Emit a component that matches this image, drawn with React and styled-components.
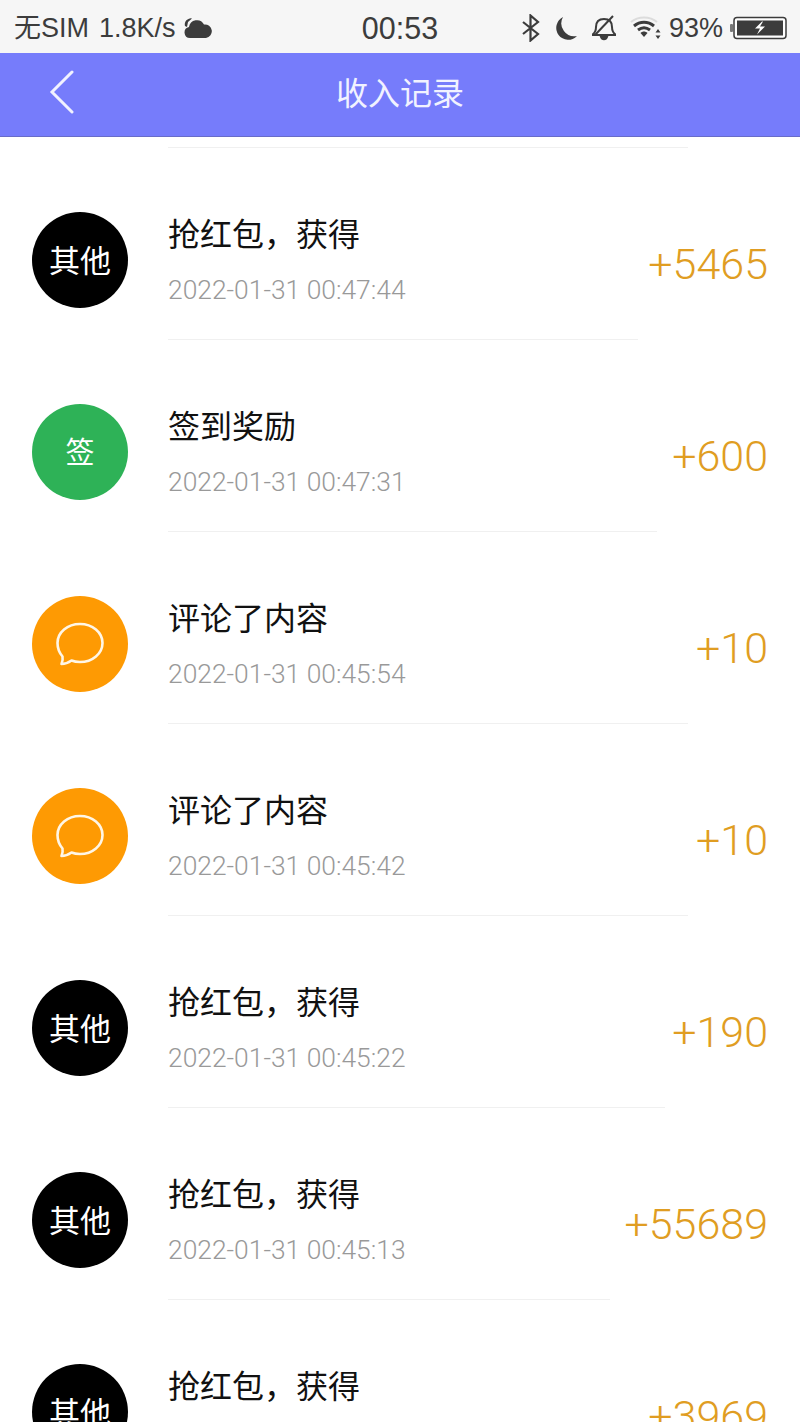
import React from 'react'
import styled, { createGlobalStyle } from 'styled-components'

const cjk = `"Liberation Sans", "Noto Sans CJK SC", sans-serif`

const Global = createGlobalStyle`
  html, body { margin: 0; padding: 0; background: #fff; }
  body { font-family: ${cjk}; }
`

const Page = styled.div`
  width: 800px;
  height: 1422px;
  overflow: hidden;
  background: #fff;
`

const StatusBar = styled.div`
  height: 53px;
  background: #f6f6f6;
  display: flex;
  align-items: center;
  justify-content: space-between;
  padding: 3px 12px 0 14px;
  box-sizing: border-box;
  color: #3c3c3c;
  font-size: 27px;
  position: relative;
`

const StatusGroup = styled.div`
  display: flex;
  align-items: center;
  gap: ${p => p.$gap || 0}px;
`

const StatusText = styled.span`
  display: block;
  line-height: 32px;
  height: 32px;
  margin-left: ${p => p.$left || 0}px;
  white-space: nowrap;
`

const Clock = styled.div`
  position: absolute;
  left: 0;
  right: 0;
  top: 12px;
  text-align: center;
  font-size: 30.500px;
  line-height: 32px;
`

const Header = styled.header`
  height: 84px;
  background: #767cfb;
  border-bottom: 1px solid #686cc8;
  box-sizing: border-box;
  display: flex;
  align-items: center;
  justify-content: center;
  position: relative;
`

const BackButton = styled.svg`
  position: absolute;
  left: 48px;
  top: 17px;
`

const HeaderTitle = styled.h1`
  margin: -8px 0 0;
  font-size: 32px;
  font-weight: 400;
  color: #f1f2ff;
`

const Divider = styled.div`
  width: ${p => p.$width}px;
  height: 1px;
  margin-left: 168px;
  background: #f0f0f0;
`

const TopDivider = styled(Divider)`
  margin-top: 10px;
`

const Row = styled.div`
  height: 191px;
  padding: 64px 32px 0;
  box-sizing: border-box;
  display: flex;
  align-items: flex-start;
`

const Avatar = styled.div`
  width: 96px;
  height: 96px;
  border-radius: 50%;
  background: ${p => p.$bg};
  display: flex;
  align-items: center;
  justify-content: center;
  flex-shrink: 0;
`

const TextAvatar = styled(Avatar)`
  box-sizing: border-box;
  padding-bottom: 4px;
  color: #fff;
  font-size: ${p => p.$size}px;
`

const Body = styled.div`
  margin-left: 40px;
  flex: 1;
  display: flex;
  flex-direction: column;
`

const Title = styled.div`
  font-size: 32px;
  line-height: 44px;
  margin-top: 1px;
  color: #111;
`

const Time = styled.div`
  font-family: Roboto, sans-serif;
  font-weight: 300;
  font-size: 26.400px;
  line-height: 32px;
  margin-top: 17px;
  color: #999;
`

const Amount = styled.div`
  font-family: Roboto, sans-serif;
  font-weight: 300;
  font-size: 43px;
  line-height: 50px;
  margin-top: 27px;
  color: #e09d22;
`

function Cloud() {
  return (
    <svg width="28" height="22" viewBox="0 0 28 22">
      <path d="M1 9a6 6 0 0 1 7-7.500L4 5 3 10z" fill="#3c3c3c" />
      <path d="M6 21a5.500 5.500 0 0 1-1-10.900 8 8 0 0 1 15-2.600A6.800 6.800 0 0 1 22 21z" fill="#3c3c3c" />
    </svg>
  )
}

function BluetoothIcon() {
  return (
    <svg width="18" height="28" viewBox="0 0 18 28" fill="none" stroke="#3c3c3c" strokeWidth="2.200">
      <path d="M1 8l15 12-7.500 6.500v-25L16 8 1 20" />
    </svg>
  )
}

function Moon() {
  return (
    <svg width="24" height="24" viewBox="0 0 24 24">
      <path d="M9 1a13 13 0 0 0 14 19A12 12 0 1 1 9 1z" fill="#3c3c3c" />
    </svg>
  )
}

function BellOff() {
  return (
    <svg width="24" height="26" viewBox="0 0 24 26" fill="none" stroke="#3c3c3c" strokeWidth="2">
      <path d="M0 20h24c-3-2-4-4-4-8 0-5-3-8-8-8s-8 3-8 8c0 4-1 6-4 8z" />
      <path d="M21 1 3 20" />
      <path d="M9 22c1 3 5 3 6 0z" fill="#3c3c3c" />
    </svg>
  )
}

function Wifi() {
  return (
    <svg width="32" height="24" viewBox="0 0 32 24" fill="none">
      <path d="M1 6c7-6 19-6 26 0" stroke="#dcdcdc" strokeWidth="2" />
      <path d="M4 10c6-5 14-5 20 0" stroke="#3c3c3c" strokeWidth="3" />
      <path d="M8 14c4-3 8-3 12 0" stroke="#3c3c3c" strokeWidth="3" />
      <path d="M10.500 17c2-2 5-2 7 0l-3.500 4z" fill="#3c3c3c" />
      <path d="M28 13l2.500 3.500h-5zM28 23l2.500-3.500h-5z" fill="#3c3c3c" />
    </svg>
  )
}

function Battery() {
  return (
    <svg width="58" height="24" viewBox="0 0 58 24">
      <rect x="0" y="8" width="3" height="8" rx="1" fill="#777" />
      <rect x="4" y="1.500" width="52" height="21" rx="3" fill="#fff" stroke="#3c3c3c" strokeWidth="1.500" />
      <rect x="7" y="4.500" width="46" height="15" fill="#3c3c3c" />
      <path d="M32 5.500l-7 7h5l-3 6 8-8h-5l3-5z" fill="#fff" />
    </svg>
  )
}

function Bubble() {
  return (
    <svg width="50" height="44" viewBox="0 0 50 44" fill="none">
      <path
        d="M25 2c12.500 0 22.500 8.500 22.500 19S37.500 40 25 40c-3 0-6-.5-8.500-1.500C13 41 9.500 42 6.500 42c1-2.500 1.500-5 1-7.500C4.500 31 2.500 26.500 2.500 21 2.500 10.500 12.500 2 25 2z"
        stroke="#fff6e6"
        strokeWidth="2.600"
        strokeLinejoin="round"
      />
    </svg>
  )
}

const rows = [
  { kind: 'other', title: '抢红包，获得', time: '2022-01-31 00:47:44', amount: '+5465', line: 470 },
  { kind: 'sign', title: '签到奖励', time: '2022-01-31 00:47:31', amount: '+600', line: 489 },
  { kind: 'comment', title: '评论了内容', time: '2022-01-31 00:45:54', amount: '+10', line: 520 },
  { kind: 'comment', title: '评论了内容', time: '2022-01-31 00:45:42', amount: '+10', line: 520 },
  { kind: 'other', title: '抢红包，获得', time: '2022-01-31 00:45:22', amount: '+190', line: 497 },
  { kind: 'other', title: '抢红包，获得', time: '2022-01-31 00:45:13', amount: '+55689', line: 442 },
  { kind: 'other', title: '抢红包，获得', amount: '+3969', line: 470 },
]

function RowAvatar({ kind }) {
  if (kind === 'sign') return <TextAvatar $bg="#2eb257" $size={29}>签</TextAvatar>
  if (kind === 'comment') return <Avatar $bg="#fe9a03"><Bubble /></Avatar>
  return <TextAvatar $bg="#000" $size={31}>其他</TextAvatar>
}

export default function App() {
  return (
    <Page>
      <Global />
      <StatusBar>
        <StatusGroup $gap={8}>
          <StatusText>无SIM</StatusText>
          <StatusText $left={2}>1.8K/s</StatusText>
          <Cloud />
        </StatusGroup>
        <Clock>00:53</Clock>
        <StatusGroup $gap={7}>
          <StatusGroup $gap={14}>
            <BluetoothIcon />
            <Moon />
            <BellOff />
            <Wifi />
          </StatusGroup>
          <StatusText>93%</StatusText>
          <Battery />
        </StatusGroup>
      </StatusBar>
      <Header>
        <BackButton width="28" height="44" viewBox="0 0 28 44" fill="none" stroke="#f1f2ff" strokeWidth="3" strokeLinecap="round">
          <path d="M24 2 4 22l20 20" />
        </BackButton>
        <HeaderTitle>收入记录</HeaderTitle>
      </Header>
      <TopDivider $width={520} />
      {rows.map((r, i) => (
        <React.Fragment key={i}>
          <Row>
            <RowAvatar kind={r.kind} />
            <Body>
              <Title>{r.title}</Title>
              {r.time && <Time>{r.time}</Time>}
            </Body>
            <Amount>{r.amount}</Amount>
          </Row>
          <Divider $width={r.line} />
        </React.Fragment>
      ))}
    </Page>
  )
}
